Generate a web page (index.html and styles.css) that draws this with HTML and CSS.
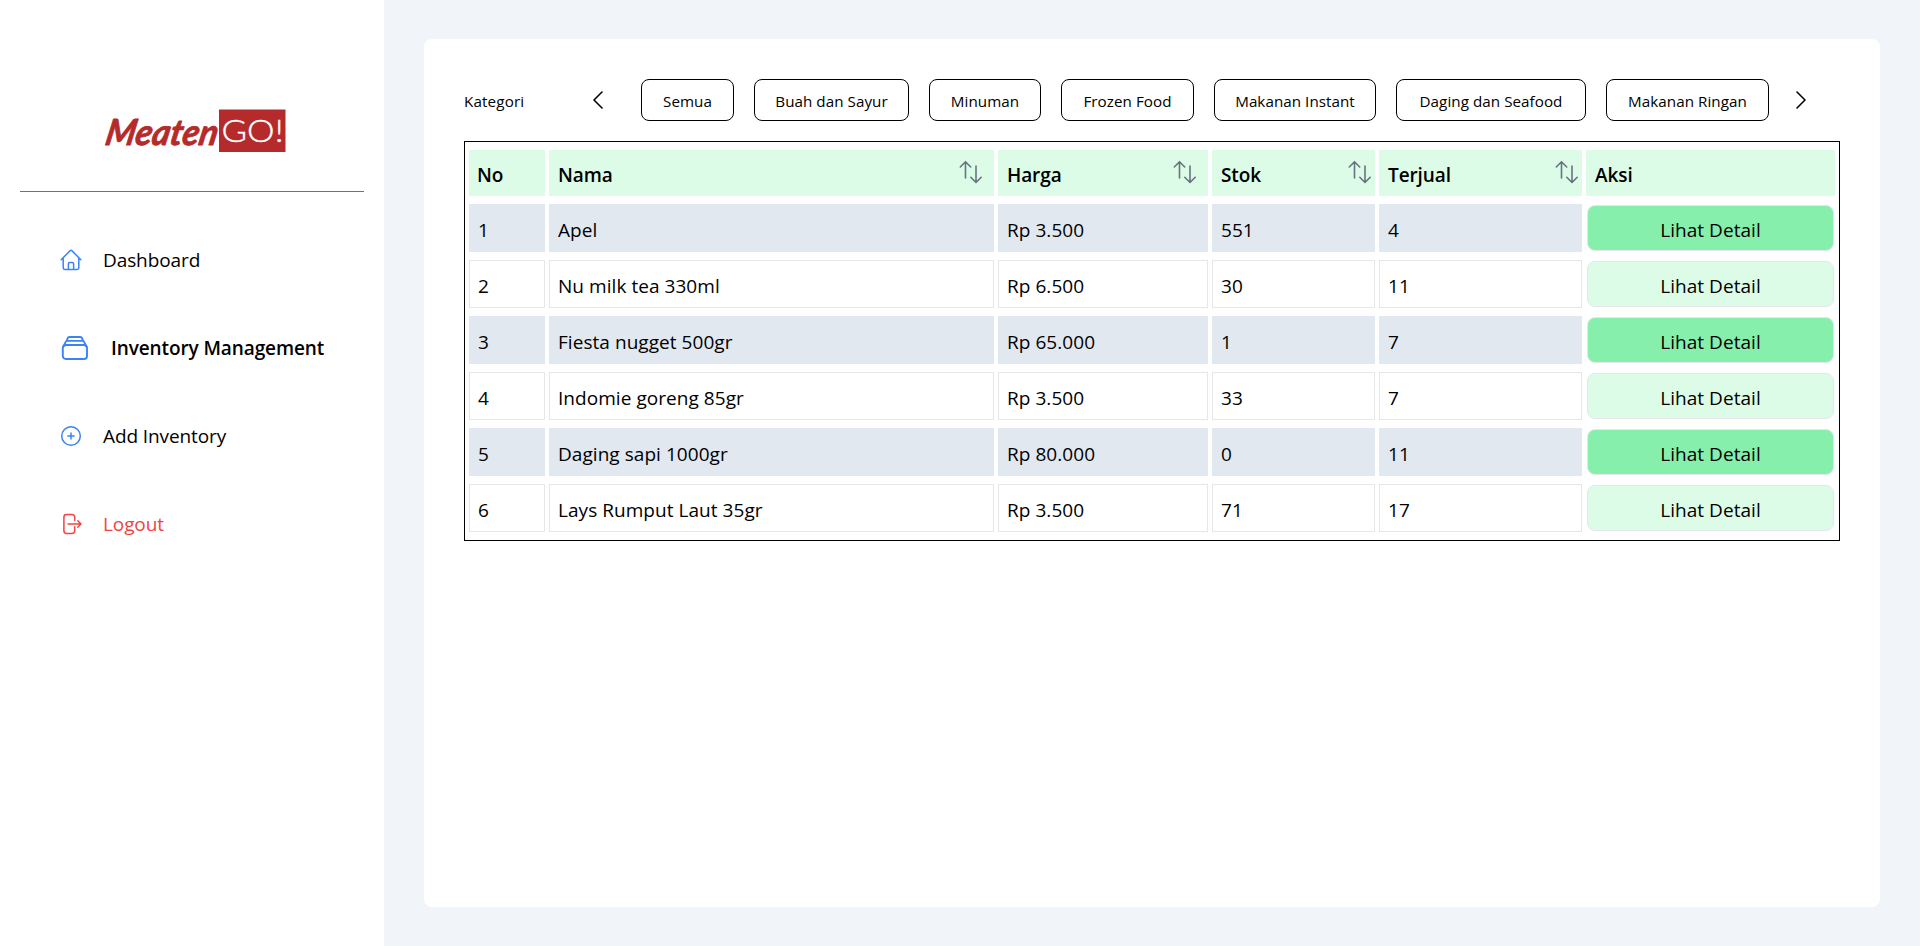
FILE: index.html
```html
<!DOCTYPE html>
<html lang="id">
<head>
<meta charset="utf-8">
<title>Inventory Management</title>
<link rel="stylesheet" href="styles.css">
</head>
<body>
<svg class="sprite" aria-hidden="true">
  <symbol id="sort" viewBox="0 0 24 26">
    <path d="M6.5 19V3M1.3 8 6.5 2.7 11.7 8M17 7v16M11.8 18.3l5.2 5.2 5.2-5.2"/>
  </symbol>
</svg>
<div class="app">
  <aside class="sidebar">
    <div class="brand">
      <svg class="logo" width="184" height="44" viewBox="0 0 184 44">
        <text class="logo-script" transform="translate(1 35.500) skewX(-11)" textLength="112" lengthAdjust="spacingAndGlyphs">Meaten</text>
        <rect x="116" y="0.5" width="66.5" height="42.5" fill="#b52a2a"/>
        <text class="logo-go" x="118.5" y="33" textLength="62" lengthAdjust="spacingAndGlyphs">GO!</text>
      </svg>
    </div>
    <nav class="nav">
      <a class="nav-item">
        <svg class="nav-icon" width="22" height="22" viewBox="0 0 22 22"><path d="M1.2 10.8 10.2 1.6q.8-.8 1.6 0l9 9.2M3.2 9v9.8q0 1.6 1.6 1.6h12.4q1.6 0 1.6-1.6V9M8.4 20.2v-5.4q0-1.4 1.4-1.4h2.4q1.4 0 1.4 1.4v5.4"/></svg>
        <span>Dashboard</span>
      </a>
      <a class="nav-item active">
        <svg class="nav-icon" width="28" height="28" viewBox="0 0 28 28"><rect x="2.800" y="11" width="24.2" height="14" rx="3"/><path d="M3.800 12 5.400 8.4Q6 6.900 7.600 6.900h14.6q1.6 0 2.200 1.500L26 12M6.800 7l.7-2.400Q8 3 9.600 3h10.600q1.600 0 2.100 1.600L23 7"/></svg>
        <span>Inventory Management</span>
      </a>
      <a class="nav-item">
        <svg class="nav-icon" width="22" height="22" viewBox="0 0 22 22"><circle cx="11" cy="11" r="9.300"/><path d="M11 7.900v6.200M7.900 11h6.200"/></svg>
        <span>Add Inventory</span>
      </a>
      <a class="nav-item danger">
        <svg class="nav-icon" width="22" height="22" viewBox="0 0 22 22"><path d="M14.700 7.500V4.200q0-2.700-2.700-2.700H6.600Q3.900 1.500 3.900 4.200v13.600q0 2.700 2.700 2.700H12q2.700 0 2.700-2.700v-4M8 11h13M17.800 7.800 21 11l-3.200 3.200"/></svg>
        <span>Logout</span>
      </a>
    </nav>
  </aside>
  <main class="main">
    <section class="panel">
      <div class="filter">
        <span class="filter-label">Kategori</span>
        <svg class="chevron" width="12" height="18" viewBox="0 0 12 18"><path d="M10 1 2 9l8 8"/></svg>
        <div class="chips">
          <button class="chip w-semua">Semua</button>
          <button class="chip w-buah">Buah dan Sayur</button>
          <button class="chip w-minuman">Minuman</button>
          <button class="chip w-frozen">Frozen Food</button>
          <button class="chip w-instant">Makanan Instant</button>
          <button class="chip w-daging">Daging dan Seafood</button>
          <button class="chip w-ringan">Makanan Ringan</button>
        </div>
        <svg class="chevron next" width="12" height="18" viewBox="0 0 12 18"><path d="m2 1 8 8-8 8"/></svg>
      </div>
      <table class="stock">
        <colgroup><col class="c-no"><col class="c-nama"><col class="c-harga"><col class="c-stok"><col class="c-terjual"><col class="c-aksi"></colgroup>
        <thead>
          <tr>
            <th>No</th>
            <th><div class="head wide">Nama<svg class="sort"><use href="#sort"/></svg></div></th>
            <th><div class="head wide">Harga<svg class="sort"><use href="#sort"/></svg></div></th>
            <th><div class="head">Stok<svg class="sort"><use href="#sort"/></svg></div></th>
            <th><div class="head">Terjual<svg class="sort"><use href="#sort"/></svg></div></th>
            <th>Aksi</th>
          </tr>
        </thead>
        <tbody>
          <tr><td>1</td><td>Apel</td><td>Rp 3.500</td><td>551</td><td>4</td><td class="action"><button class="detail">Lihat Detail</button></td></tr>
          <tr><td>2</td><td>Nu milk tea 330ml</td><td>Rp 6.500</td><td>30</td><td>11</td><td class="action"><button class="detail">Lihat Detail</button></td></tr>
          <tr><td>3</td><td>Fiesta nugget 500gr</td><td>Rp 65.000</td><td>1</td><td>7</td><td class="action"><button class="detail">Lihat Detail</button></td></tr>
          <tr><td>4</td><td>Indomie goreng 85gr</td><td>Rp 3.500</td><td>33</td><td>7</td><td class="action"><button class="detail">Lihat Detail</button></td></tr>
          <tr><td>5</td><td>Daging sapi 1000gr</td><td>Rp 80.000</td><td>0</td><td>11</td><td class="action"><button class="detail">Lihat Detail</button></td></tr>
          <tr><td>6</td><td>Lays Rumput Laut 35gr</td><td>Rp 3.500</td><td>71</td><td>17</td><td class="action"><button class="detail">Lihat Detail</button></td></tr>
        </tbody>
      </table>
    </section>
  </main>
</div>
</body>
</html>
```
FILE: styles.css
```css
* { box-sizing: border-box; }
body {
  margin: 0;
  font-family: "Open Sans", "Noto Sans", sans-serif;
  font-size: 19px;
  letter-spacing: 0.05px;
  color: #000;
}
button { font: inherit; letter-spacing: inherit; color: inherit; margin: 0; }
.sprite { display: none; }
svg { flex: none; }
.app { display: flex; height: 946px; background: #f1f5f9; }

.sidebar { width: 384px; padding: 0 20px; background: #fff; }
.brand { height: 192px; padding: 109px 0 0 83px; border-bottom: 1px solid #64748b; }
.logo { display: block; }
.logo-script {
  font: italic 700 36px Lato, sans-serif;
  letter-spacing: 0;
  fill: #b52a2a;
  stroke: #b52a2a;
  stroke-width: 0.8;
  stroke-linejoin: round;
}
.logo-go { font: 300 32px Lato, sans-serif; letter-spacing: 0; fill: #fff; stroke: #fff; stroke-width: 0.4; }
.nav { display: flex; flex-direction: column; gap: 40px; padding: 44px 0 0 40px; letter-spacing: -0.1px; }
.nav-item { display: flex; align-items: center; gap: 21px; height: 48px; }
.active { gap: 23px; font-weight: 600; }
.nav-icon { fill: none; stroke: #3b82f6; stroke-width: 1.5; stroke-linecap: round; stroke-linejoin: round; }
.active .nav-icon { stroke-width: 1.9; }
.danger { color: #ef4444; }
.danger .nav-icon { stroke: #ef4444; }

.main { flex: 1; padding: 39px 40px; }
.panel { height: 868px; padding: 40px; background: #fff; border-radius: 8px; }
.filter { display: flex; align-items: center; height: 42px; font-size: 15.2px; }
.filter-label { width: 128px; padding-top: 2px; letter-spacing: 0.15px; }
.chevron { fill: none; stroke: #000; stroke-width: 1.6; stroke-linecap: round; stroke-linejoin: round; }
.chips { display: flex; gap: 20px; margin: 0 26px 0 37px; }
.chip {
  height: 42px;
  padding: 2px 0 0;
  background: #fff;
  border: 1px solid #000;
  border-radius: 8px;
  white-space: nowrap;
}
.w-semua { width: 93px; }
.w-buah { width: 155px; }
.w-minuman { width: 112px; }
.w-frozen { width: 133px; }
.w-instant { width: 162px; }
.w-daging { width: 190px; }
.w-ringan { width: 163px; }

.stock {
  width: 1376px;
  margin-top: 20px;
  table-layout: fixed;
  border: 1px solid #000;
  border-collapse: separate;
  border-spacing: 4px 8px;
}
.c-no { width: 76px; }
.c-nama { width: 445px; }
.c-harga { width: 210px; }
.c-stok { width: 163px; }
.c-terjual { width: 203px; }
.c-aksi { width: 249px; }
th { height: 46px; padding: 4px 4px 0 9px; background: #dcfce7; font-weight: 600; text-align: left; line-height: 26px; letter-spacing: -0.1px; }
th:first-child { padding-left: 8px; }
.head { display: flex; align-items: center; justify-content: space-between; }
.wide { padding-right: 8px; }
.sort { width: 24px; height: 26px; margin: -6px -1px 0 0; fill: none; stroke: #6b7280; stroke-width: 1.6; stroke-linecap: round; stroke-linejoin: round; }
td { height: 48px; padding: 4px 8px 0; border: 1px solid #e5e7eb; line-height: 26px; }
tbody tr:nth-child(odd) td { background: #e2e8f0; border-color: #e2e8f0; }
tbody tr td.action { padding: 1px; background: none; border: 0; }
.detail {
  display: block;
  width: 100%;
  height: 46px;
  padding: 3px 0 0;
  background: #dcfce7;
  border: 1px solid #e5e7eb;
  border-radius: 8px;
}
tbody tr:nth-child(odd) .detail { background: #86efac; }
```
